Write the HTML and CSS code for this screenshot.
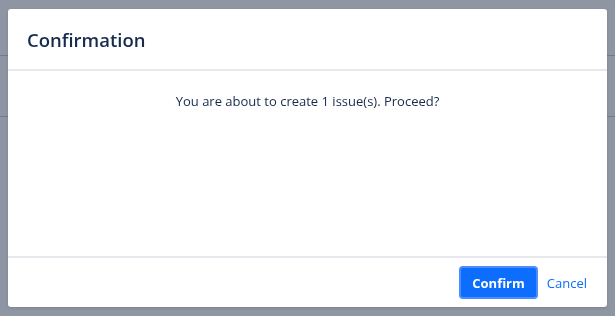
FILE: index.html
```html
<!DOCTYPE html>
<html lang="en">
<head>
    <meta charset="UTF-8">
    <meta name="viewport" content="width=device-width, initial-scale=1.0">
    <title>Confirmation</title>
    <link rel="stylesheet" href="styles.css">
</head>
<body>
    <div class="page">
        <div class="page-header"></div>
        <div class="page-row"></div>
    </div>
    <div class="backdrop">
        <div class="modal">
            <div class="modal-header">
                <h2 class="modal-title">Confirmation</h2>
            </div>
            <div class="modal-body">
                <p>You are about to create 1 issue(s). Proceed?</p>
            </div>
            <div class="modal-footer">
                <button class="btn-confirm">Confirm</button>
                <a href="#" class="btn-cancel">Cancel</a>
            </div>
        </div>
    </div>
</body>
</html>
```

FILE: styles.css
```css
:root {
    --primary: #0d6efd;
    --text: #172b4d;
    --border: #e6e8ee;
}

body {
    margin: 0;
    font-family: 'Open Sans', 'Noto Sans', sans-serif;
    background: #fff;
    color: var(--text);
}

.page-header {
    height: 55px;
    border-bottom: 1px solid #ccc;
}

.page-row {
    height: 60px;
    border-bottom: 1px solid #ccc;
}

.backdrop {
    position: fixed;
    inset: 0;
    background: rgba(20, 36, 62, 0.48);
    display: flex;
    justify-content: center;
    padding-top: 9px;
}

.modal {
    width: 599px;
    height: 298px;
    background: #fff;
    border-radius: 3px;
    display: flex;
    flex-direction: column;
    box-shadow: 0 1px 3px rgba(0, 0, 0, 0.15);
}

.modal-header {
    height: 60px;
    padding: 0 19px;
    display: flex;
    align-items: center;
    border-bottom: 2px solid var(--border);
}

.modal-title {
    margin: 0;
    font-size: 18.5px;
    font-weight: 600;
    color: #172b4d;
}

.modal-body {
    flex: 1;
    text-align: center;
    font-size: 13px;
    color: #172b4d;
}

.modal-body p {
    margin: 21px 0 0;
}

.modal-footer {
    height: 49px;
    border-top: 2px solid var(--border);
    display: flex;
    justify-content: flex-end;
    align-items: center;
    gap: 9px;
    padding: 0 20px;
}

.btn-confirm {
    font-family: inherit;
    font-size: 13px;
    font-weight: 700;
    color: #fff;
    background: var(--primary);
    border: 2px solid #4c8dfb;
    border-radius: 4px;
    height: 33px;
    padding: 0 11px;
    cursor: pointer;
}

.btn-cancel {
    font-size: 13px;
    color: var(--primary);
    text-decoration: none;
}
```
